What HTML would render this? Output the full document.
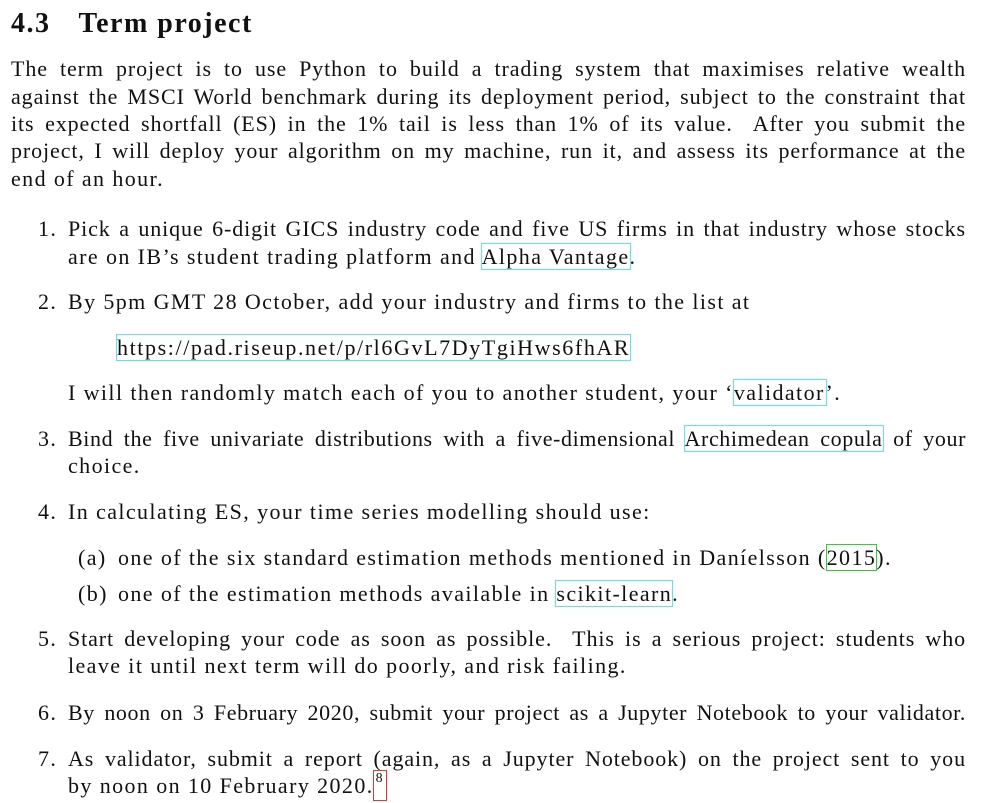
<!DOCTYPE html>
<html><head><meta charset="utf-8">
<style>
body{margin:0;background:#fff;width:997px;height:803px;overflow:hidden;position:relative;font-family:"Liberation Serif",serif;color:#111;}
.l{position:absolute;height:27px;line-height:27px;font-size:22px;letter-spacing:1.4px;white-space:nowrap;}
.j{text-align:justify;text-align-last:justify;letter-spacing:0.9px;}
.c{outline:1px solid #5fe3ec;}
.g{outline:1px solid #3c3;}
.r{outline:1px solid #e33;}
h1{position:absolute;left:11px;top:8px;margin:0;font-size:28px;letter-spacing:1.5px;font-weight:bold;line-height:32px;white-space:nowrap;}
</style></head><body>
<h1>4.3<span style="display:inline-block;width:28px"></span>Term project</h1>
<div class="l j" style="left:11px;top:55px;width:955px">The term project is to use Python to build a trading system that maximises relative wealth</div>
<div class="l j" style="left:11px;top:83px;width:955px">against the MSCI World benchmark during its deployment period, subject to the constraint that</div>
<div class="l j" style="left:11px;top:110px;width:955px">its expected shortfall (ES) in the 1% tail is less than 1% of its value.&nbsp; After you submit the</div>
<div class="l j" style="left:11px;top:137px;width:955px">project, I will deploy your algorithm on my machine, run it, and assess its performance at the</div>
<div class="l" style="left:11px;top:165px">end of an hour.</div>

<div class="l" style="left:38px;top:215px">1.</div>
<div class="l j" style="left:68px;top:215px;width:898px">Pick a unique 6-digit GICS industry code and five US firms in that industry whose stocks</div>
<div class="l" style="left:68px;top:243px">are on IB’s student trading platform and <span class="c">Alpha Vantage</span>.</div>

<div class="l" style="left:38px;top:288px">2.</div>
<div class="l" style="left:68px;top:288px">By 5pm GMT 28 October, add your industry and firms to the list at</div>
<div class="l" style="left:117px;top:334px;letter-spacing:1.6px"><span class="c">https://pad.riseup.net/p/rl6GvL7DyTgiHws6fhAR</span></div>
<div class="l" style="left:68px;top:379px">I will then randomly match each of you to another student, your ‘<span class="c">validator</span>’.</div>

<div class="l" style="left:38px;top:425px">3.</div>
<div class="l j" style="left:68px;top:425px;width:898px;letter-spacing:0.6px">Bind the five univariate distributions with a five-dimensional <span class="c">Archimedean copula</span> of your</div>
<div class="l" style="left:68px;top:452px">choice.</div>

<div class="l" style="left:38px;top:498px">4.</div>
<div class="l" style="left:68px;top:498px">In calculating ES, your time series modelling should use:</div>
<div class="l" style="left:78px;top:544px">(a)</div>
<div class="l" style="left:118px;top:544px">one of the six standard estimation methods mentioned in Daníelsson (<span class="g">2015</span>).</div>
<div class="l" style="left:78px;top:580px">(b)</div>
<div class="l" style="left:118px;top:580px">one of the estimation methods available in <span class="c">scikit-learn</span>.</div>

<div class="l" style="left:38px;top:625px">5.</div>
<div class="l j" style="left:68px;top:625px;width:898px">Start developing your code as soon as possible.&nbsp; This is a serious project: students who</div>
<div class="l" style="left:68px;top:652px">leave it until next term will do poorly, and risk failing.</div>

<div class="l" style="left:38px;top:699px">6.</div>
<div class="l j" style="left:68px;top:699px;width:898px;letter-spacing:0.6px">By noon on 3 February 2020, submit your project as a Jupyter Notebook to your validator.</div>

<div class="l" style="left:38px;top:745px">7.</div>
<div class="l j" style="left:68px;top:745px;width:898px">As validator, submit a report (again, as a Jupyter Notebook) on the project sent to you</div>
<div class="l" style="left:68px;top:772px">by noon on 10 February 2020.<span class="r" style="display:inline-block;font-size:14px;line-height:16px;vertical-align:top;height:29px;padding:0 2px;margin-top:-1px">8</span></div>
</body></html>
